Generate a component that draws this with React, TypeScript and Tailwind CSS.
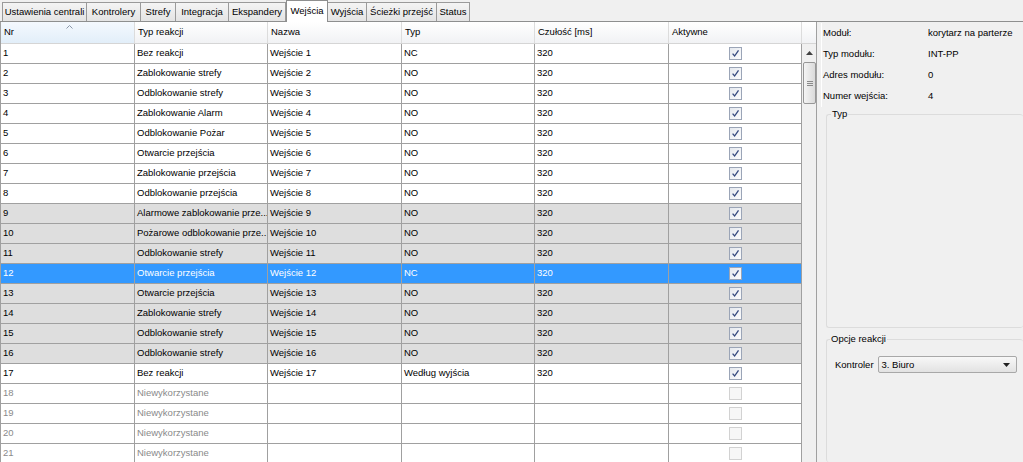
import type { ReactNode } from 'react'

const font = "font-['Liberation_Sans',Arial,sans-serif]"

const tabs = [
  { label: 'Ustawienia centrali', w: 'w-[85px]' },
  { label: 'Kontrolery', w: 'w-[54px]' },
  { label: 'Strefy', w: 'w-[35px]' },
  { label: 'Integracja', w: 'w-[53px]' },
  { label: 'Ekspandery', w: 'w-[57px]' },
  { label: 'Wejścia', w: 'w-[42px]', active: true },
  { label: 'Wyjścia', w: 'w-[39px]' },
  { label: 'Ścieżki przejść', w: 'w-[70px]' },
  { label: 'Status', w: 'w-[33px]' },
]

const colWidths = ['w-[134px]', 'w-[133px]', 'w-[134px]', 'w-[133px]', 'w-[134px]', 'w-[133px]']
const headers = ['Nr', 'Typ reakcji', 'Nazwa', 'Typ', 'Czułość [ms]', 'Aktywne']

type Row = {
  nr: number
  reaction: string
  name: string
  type: string
  ms: string
  active: boolean
  tone: 'white' | 'gray' | 'selected' | 'unused'
}

const used: [string, string, Row['tone']][] = [
  ['Bez reakcji', 'NC', 'white'],
  ['Zablokowanie strefy', 'NO', 'white'],
  ['Odblokowanie strefy', 'NO', 'white'],
  ['Zablokowanie Alarm', 'NO', 'white'],
  ['Odblokowanie Pożar', 'NO', 'white'],
  ['Otwarcie przejścia', 'NO', 'white'],
  ['Zablokowanie przejścia', 'NO', 'white'],
  ['Odblokowanie przejścia', 'NO', 'white'],
  ['Alarmowe zablokowanie prze...', 'NO', 'gray'],
  ['Pożarowe odblokowanie prze...', 'NO', 'gray'],
  ['Odblokowanie strefy', 'NO', 'gray'],
  ['Otwarcie przejścia', 'NC', 'selected'],
  ['Otwarcie przejścia', 'NO', 'gray'],
  ['Zablokowanie strefy', 'NO', 'gray'],
  ['Odblokowanie strefy', 'NO', 'gray'],
  ['Odblokowanie strefy', 'NO', 'gray'],
  ['Bez reakcji', 'Według wyjścia', 'white'],
]

const rows: Row[] = [
  ...used.map(([reaction, type, tone], i) => ({
    nr: i + 1,
    reaction,
    name: `Wejście ${i + 1}`,
    type,
    ms: '320',
    active: true,
    tone,
  })),
  ...[18, 19, 20, 21].map((nr) => ({
    nr,
    reaction: 'Niewykorzystane',
    name: '',
    type: '',
    ms: '',
    active: false,
    tone: 'unused' as const,
  })),
]

const CheckBox = ({ checked }: { checked: boolean }) =>
  checked ? (
    <div className="flex h-[13px] w-[13px] items-center justify-center border border-[#9ba5b7] bg-gradient-to-br from-[#e4e8ee] to-[#fcfcfd]">
      <svg width="9" height="9" viewBox="0 0 9 9">
        <path d="M1.6 4.6 L3.6 7 L7.5 1.3" fill="none" stroke="#34487e" strokeWidth="1.3" />
      </svg>
    </div>
  ) : (
    <div className="h-[13px] w-[13px] border border-[#d2d2d2] bg-[#f7f7f7]" />
  )

const Cell = ({ w, children }: { w: string; children?: ReactNode }) => (
  <div className={`${w} flex h-full shrink-0 items-center overflow-hidden whitespace-nowrap border-r border-[#a0a0a0] pl-[2px]`}>
    {children}
  </div>
)

const GridRow = ({ row }: { row: Row }) => {
  const bg =
    row.tone === 'selected'
      ? 'bg-[#3399ff] text-white'
      : row.tone === 'gray'
        ? 'bg-[#dedede] text-black'
        : row.tone === 'unused'
          ? 'bg-white text-[#8a8a8a]'
          : 'bg-white text-black'
  return (
    <div className={`flex h-[20px] shrink-0 border-b border-[#a0a0a0] ${bg}`}>
      <Cell w={colWidths[0]}>{row.nr}</Cell>
      <Cell w={colWidths[1]}>{row.reaction}</Cell>
      <Cell w={colWidths[2]}>{row.name}</Cell>
      <Cell w={colWidths[3]}>{row.type}</Cell>
      <Cell w={colWidths[4]}>{row.ms}</Cell>
      <div className={`${colWidths[5]} flex h-full shrink-0 items-center justify-center border-r border-[#a0a0a0]`}>
        <CheckBox checked={row.active} />
      </div>
    </div>
  )
}

const ScrollBar = () => (
  <div className="flex w-[15px] shrink-0 flex-col bg-[#f0f0f0]">
    <div className="flex h-[18px] items-center justify-center">
      <svg width="7" height="4" viewBox="0 0 7 4">
        <path d="M0 4 L3.5 0 L7 4 Z" fill="#404040" />
      </svg>
    </div>
    <div className="mx-[1px] flex h-[42px] items-center justify-center rounded-[2px] border border-[#979797] bg-gradient-to-r from-[#f4f4f4] to-[#dadada]">
      <div className="flex flex-col gap-[1px]">
        <div className="h-px w-[6px] bg-[#8a8a8a]" />
        <div className="h-px w-[6px] bg-[#8a8a8a]" />
        <div className="h-px w-[6px] bg-[#8a8a8a]" />
      </div>
    </div>
    <div className="flex-1" />
  </div>
)

const InfoRow = ({ label, value }: { label: string; value: string }) => (
  <div className="flex h-[21px] items-center">
    <span className="w-[105px] shrink-0">{label}</span>
    <span>{value}</span>
  </div>
)

export default function App() {
  return (
    <div className={`${font} flex h-[462px] w-[1023px] flex-col overflow-hidden bg-[#f0f0f0] text-[9.5px] text-black`}>
      <div className="flex h-[22px] shrink-0 items-end border-b border-[#8e8f8f] pl-[2px]">
        {tabs.map((t) =>
          t.active ? (
            <div
              key={t.label}
              className={`${t.w} relative -mb-px flex h-[22px] items-center justify-center border border-b-0 border-[#8e8f8f] bg-white`}
            >
              {t.label}
            </div>
          ) : (
            <div
              key={t.label}
              className={`${t.w} flex h-[19px] items-center justify-center border border-b-0 border-l-0 border-[#9a9a9a] bg-gradient-to-b from-[#f4f4f4] to-[#e4e4e4] first:border-l`}
            >
              {t.label}
            </div>
          ),
        )}
      </div>

      <div className="flex min-h-0 flex-1">
        <div className="flex w-[816px] shrink-0 flex-col border-l border-[#a0a0a0] bg-white">
          <div className="flex h-[22px] shrink-0 border-b border-[#d5d5d5] bg-gradient-to-b from-white to-[#f1f2f4]">
            {headers.map((h, i) => (
              <div
                key={h}
                className={`${colWidths[i]} relative flex shrink-0 items-center border-r border-[#dcdcdc] pl-[3px] ${i === 0 ? 'bg-gradient-to-b from-[#f4f9fe] to-[#e2eef9]' : ''}`}
              >
                {h}
                {i === 0 && (
                  <svg className="absolute left-[65px] top-[3px]" width="7" height="4" viewBox="0 0 7 4">
                    <path d="M0.5 3.5 L3.5 0.5 L6.5 3.5" fill="none" stroke="#8a96a8" strokeWidth="1" />
                  </svg>
                )}
              </div>
            ))}
            <div className="flex-1" />
          </div>
          <div className="flex min-h-0 flex-1">
            <div className="flex w-[801px] shrink-0 flex-col overflow-hidden">
              {rows.map((r) => (
                <GridRow key={r.nr} row={r} />
              ))}
            </div>
            <ScrollBar />
          </div>
        </div>

        <div className="flex flex-1 flex-col border-l border-[#a0a0a0] pl-[4px] pt-[1px]">
          <div className="border-l border-white pl-[1px]">
            <InfoRow label="Moduł:" value="korytarz na parterze" />
            <InfoRow label="Typ modułu:" value="INT-PP" />
            <InfoRow label="Adres modułu:" value="0" />
            <InfoRow label="Numer wejścia:" value="4" />
          </div>
          <fieldset className="ml-[5px] h-[221px] rounded-[3px] border border-r-0 border-[#dcdcdc]">
            <legend className="ml-[4px] px-[1px]">Typ</legend>
          </fieldset>
          <fieldset className="ml-[5px] mt-[4px] flex-1 rounded-[3px] border border-r-0 border-b-0 border-[#dcdcdc]">
            <legend className="ml-[3px] px-[1px]">Opcje reakcji</legend>
            <div className="mt-[10px] flex items-center pl-[8px]">
              <span className="mr-[4px]">Kontroler</span>
              <div className="flex h-[17px] w-[139px] items-center justify-between rounded-[2px] border border-[#a8a8a8] bg-gradient-to-b from-[#f8f8f8] to-[#e2e2e2] pl-[3px] pr-[6px]">
                <span>3. Biuro</span>
                <svg width="7" height="4" viewBox="0 0 7 4">
                  <path d="M0 0 L7 0 L3.5 4 Z" fill="#202020" />
                </svg>
              </div>
            </div>
          </fieldset>
        </div>
      </div>
    </div>
  )
}
